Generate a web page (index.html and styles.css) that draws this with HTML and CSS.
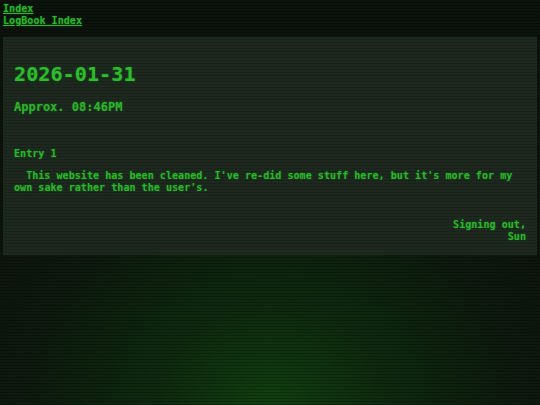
FILE: index.html
```html
<!DOCTYPE html>
<html lang="en">
<head>
<meta charset="utf-8">
<title>2026-01-31</title>
<link rel="stylesheet" href="styles.css">
</head>
<body>
<nav class="nav">
  <a href="#" class="nav-link">Index</a>
  <a href="#" class="nav-link">LogBook Index</a>
</nav>
<main class="card">
  <h1 class="date">2026-01-31</h1>
  <h2 class="time">Approx. 08:46PM</h2>
  <h3 class="entry">Entry 1</h3>
  <p class="text">This website has been cleaned. I've re-did some stuff here, but it's more for my own sake rather than the user's.</p>
  <p class="sign">Signing out,<br>Sun</p>
</main>
</body>
</html>
```
FILE: styles.css
```css
html, body {
  margin: 0;
  padding: 0;
  height: 100%;
}
body {
  font-family: "DejaVu Sans Mono", "Liberation Mono", monospace;
  font-weight: bold;
  font-size: 10.1px;
  color: #2cb42c;
  background-color: #0c110c;
  background-image:
    repeating-linear-gradient(to bottom, rgba(0,0,0,0) 0px, rgba(0,0,0,0) 2px, rgba(0,0,0,0.25) 2px, rgba(0,0,0,0.25) 3px),
    radial-gradient(ellipse 70% 80% at 50% 100%, #11400f 0%, #0e2a0f 30%, #0d1a0d 65%, #0c120c 100%);
  padding: 0 3px;
  box-sizing: border-box;
  overflow: hidden;
}
.nav {
  display: flex;
  flex-direction: column;
  align-items: flex-start;
  padding-top: 3px;
  line-height: 11.5px;
}
.nav-link {
  color: #2cb42c;
  text-decoration: underline;
  text-shadow: 0 0 2px rgba(40,200,40,0.4);
}
.card {
  margin-top: 11px;
  padding: 25px 11px 12px 11px;
  background-color: #1d291f;
  background-image: repeating-linear-gradient(to bottom, rgba(0,0,0,0) 0px, rgba(0,0,0,0) 2px, rgba(0,0,0,0.16) 2px, rgba(0,0,0,0.16) 3px);
  text-shadow: 0 0 2px rgba(40,200,40,0.4);
}
.date {
  margin: 0;
  font-size: 20.2px;
  line-height: 24px;
  color: #2cbc2c;
}
.time {
  margin: 14px 0 0;
  font-size: 12px;
  line-height: 14.4px;
}
.entry {
  margin: 34px 0 0;
  font-size: 10.1px;
  line-height: 12px;
}
.text {
  margin: 9.5px 0 0;
  line-height: 12px;
  text-indent: 2ch;
}
.sign {
  margin: 25px 0 0;
  line-height: 12px;
  text-align: right;
}
```
